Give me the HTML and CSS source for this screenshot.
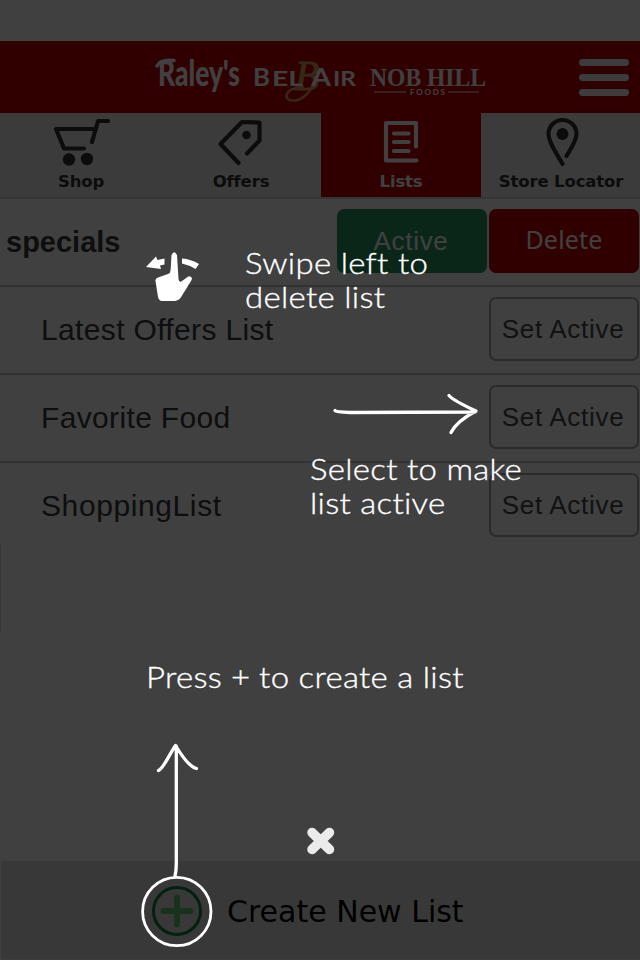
FILE: index.html
```html
<!DOCTYPE html>
<html lang="en">
<head>
<meta charset="utf-8">
<title>Shopping lists</title>
<link rel="stylesheet" href="styles.css">
</head>
<body>
<div class="app">
  <div class="status"></div>
  <header class="header">
    <svg class="brands" viewBox="0 0 340 72" width="340" height="72">
      <g fill="#fff">
        <text class="raleys" x="8" y="45" textLength="82" lengthAdjust="spacingAndGlyphs">Raley's</text>
        <path d="M7 25Q10 18 24 19.500" fill="none" stroke="#fff" stroke-width="3.500" stroke-linecap="round"/>
      </g>
      <g fill="none" stroke="#dcb868" opacity=".85">
        <text class="swash" x="145" y="49" fill="#dcb868" stroke="#dcb868" textLength="24" lengthAdjust="spacingAndGlyphs">B</text>
        <path d="M154 46C133 46 132 61 145 59.500C156 58 163 47 168 34" stroke-width="2.500"/>
      </g>
      <g fill="#fff">
        <text class="belair" y="45"><tspan class="big" x="103" textLength="17" lengthAdjust="spacingAndGlyphs">B</tspan><tspan x="122" textLength="31" lengthAdjust="spacingAndGlyphs">EL</tspan><tspan class="big" x="161" textLength="20" lengthAdjust="spacingAndGlyphs">A</tspan><tspan x="183" textLength="23" lengthAdjust="spacingAndGlyphs">IR</tspan></text>
        <text class="nobhill" x="220" y="45" textLength="116" lengthAdjust="spacingAndGlyphs">NOB HILL</text>
        <text class="foods" x="260" y="54" textLength="35">FOODS</text>
        <path d="M224 51h32M298 51h31" stroke="#fff"/>
      </g>
    </svg>
    <div class="menu"><i></i><i></i><i></i></div>
  </header>
  <nav class="tabs">
    <div class="tab">
      <svg viewBox="-2 0 60 52" width="60" height="52"><path d="M55 6H45L39 27M43 14H3L11 33.500H31" /><circle class="dot" cx="16" cy="44.500" r="6.200"/><circle class="dot" cx="34" cy="44" r="6.200"/></svg>
      <span>Shop</span>
    </div>
    <div class="tab">
      <svg viewBox="0 0 60 52" width="60" height="52"><path d="M27.500 48L9.500 29L31 7L48.500 7.500V25.500L36 38.500"/><circle class="dot" cx="35.500" cy="20" r="4.300"/></svg>
      <span>Offers</span>
    </div>
    <div class="tab current">
      <svg viewBox="0 0 60 52" width="60" height="52"><path d="M45 31.500V8H15V45.500H45.500M23 18.500H37.500M23 27H37.500M23 36H37.500"/></svg>
      <span>Lists</span>
    </div>
    <div class="tab">
      <svg viewBox="0 0 60 52" width="60" height="52"><path d="M35.500 41C39 35 45.500 26 45.500 19A14 14 0 0 0 17.500 19C17.500 28 26 39 31.500 49"/><circle class="dot" cx="31.500" cy="19" r="6"/></svg>
      <span>Store Locator</span>
    </div>
  </nav>
  <main class="lists">
    <div class="row swiped"><span class="name">specials</span><span class="btn active">Active</span><span class="btn delete">Delete</span></div>
    <div class="row"><span class="name">Latest Offers List</span><span class="btn">Set Active</span></div>
    <div class="row"><span class="name">Favorite Food</span><span class="btn">Set Active</span></div>
    <div class="row last"><span class="name">ShoppingList</span><span class="btn">Set Active</span></div>
    <div class="blank"></div>
  </main>
  <footer class="create">
    <svg viewBox="0 0 52 52" width="52" height="52"><circle cx="26" cy="26" r="23.500" fill="none" stroke="#108040" stroke-width="3"/><path d="M26 12.500V39.500M12.500 26H39.500" stroke="#60c86c" stroke-width="6" stroke-linecap="round"/></svg>
    <span>Create New List</span>
  </footer>
</div>
<div class="overlay">
  <svg class="marks" viewBox="0 0 640 960" width="640" height="960">
    <g fill="#fff">
      <path d="M146 267L156 256.500L157.500 260L164.500 258.500V264.500L160 265.500L161 269Z"/>
      <path d="M182 258.500Q191 259 199 264L195.500 269Q189 265 182 263.500Z"/>
      <path d="M171.500 255Q174.200 249.500 177 255L178.500 279Q179 283 182 281L187.500 277Q189.500 275.500 191.500 277.500Q192.500 279 191 281L180.500 298Q178 301 175 301H162Q159 301 158 297L155.500 281Q155 278.500 158 277.500L168 274Q170.500 273 170.600 270Z"/>
    </g>
    <g fill="none" stroke="#fff" stroke-width="3.300" stroke-linecap="round" stroke-linejoin="round">
      <path d="M335 410.500Q336 412 350 412.500L475 412M449 395.500Q454 401 476 411Q457 421 451 432.500"/>
      <path d="M175 876Q176.500 870 176.300 860V746M158.500 770.500C164 768 170 753 175.500 745.500C183 758 190 767 196.500 768.500"/>
      <circle cx="176.800" cy="911.500" r="34.200" stroke-width="2.800"/>
    </g>
    <path d="M312 832.500L329.500 849.500M329.500 832.500L312 849.500" stroke="#ebebeb" stroke-width="9.500" stroke-linecap="round"/>
  </svg>
  <p class="hint swipe">Swipe left to<br>delete list</p>
  <p class="hint select">Select to make<br>list active</p>
  <p class="hint press">Press<span class="plus">+</span>to create a list</p>
</div>
</body>
</html>
```
FILE: styles.css
```css
* { box-sizing: border-box; }
body { margin: 0; background: #fff; }
.app { width: 640px; height: 960px; display: flex; flex-direction: column; overflow: hidden; font-family: "Liberation Sans", sans-serif; }
.status { height: 41px; flex: none; }
.header { height: 72px; flex: none; background: #c00000; display: flex; align-items: center; justify-content: space-between; padding: 0 11px 0 150px; }
.raleys { font: 900 36px Lato, sans-serif; }
.swash { font: italic 42px "Liberation Serif", serif; }
.belair { font: bold 20px Lato, sans-serif; }
.belair .big { font-size: 25px; }
.nobhill { font: bold 26px "Liberation Serif", serif; }
.foods { font: bold 8px Lato, sans-serif; }
.menu { width: 50px; display: flex; flex-direction: column; gap: 8px; }
.menu i { height: 7px; border-radius: 4px; background: #f0f0f0; }
.tabs { height: 86px; flex: none; display: flex; background: #ececec; padding-left: 1px; border-bottom: 2px solid #d4d4d4; overflow: hidden; }
.tab { width: 160px; flex: none; display: flex; flex-direction: column; align-items: center; padding-top: 2px; color: #303030; font: bold 16.5px/20px "DejaVu Sans", sans-serif; letter-spacing: -.15px; white-space: nowrap; }
.tab span { margin-top: 5px; }
.tab path { fill: none; stroke: currentColor; stroke-width: 4.2; stroke-linecap: round; stroke-linejoin: round; }
.dot { fill: currentColor; }
.tab.current { background: #c00000; color: #fff; }
.lists { flex: 1; }
.row { height: 88px; display: flex; align-items: center; gap: 2px; padding: 0 1px 2px 41px; border-bottom: 2px solid #c8c8c8; color: #383838; font-size: 30px; letter-spacing: .35px; }
.row.last { border-bottom-color: transparent; letter-spacing: .6px; }
.name { flex: 1; padding-top: 2px; }
.swiped { padding-left: 6px; }
.swiped .name { font-size: 29px; font-weight: bold; letter-spacing: 0; }
.btn { width: 150px; height: 64px; border: 2px solid #a8a8a8; border-radius: 7px; text-align: center; padding-right: 2px; font-size: 26px; line-height: 60px; letter-spacing: .7px; color: #484848; }
.btn.active { background: #289860; border-color: #289860; color: #fff; }
.btn.delete { background: #c00000; border-color: #c00000; color: #fff; font: 25px/57px "Noto Sans", sans-serif; letter-spacing: .2px; padding: 0; }
.blank { height: 88px; margin-top: -7px; border-left: 1px solid #d8d8d8; }
.create { height: 99px; flex: none; display: flex; align-items: center; gap: 24px; margin-left: 1px; padding: 2px 0 0 150px; background: #e0e0e0; border-bottom: 1px solid #f4f4f4; color: #000; font: 30px "DejaVu Sans", sans-serif; }
.overlay { position: absolute; top: 0; left: 0; width: 640px; height: 960px; background: rgba(0, 0, 0, .75); }
.marks { display: block; }
.hint { position: absolute; margin: 0; color: #fff; font: 300 30px/34px Lato, sans-serif; letter-spacing: .25px; white-space: nowrap; transform: scaleX(1.1); transform-origin: left; -webkit-text-stroke: .35px #fff; }
.swipe { left: 245px; top: 244.5px; }
.select { left: 310px; top: 450.5px; }
.press { left: 146px; top: 658.5px; }
.plus { margin: 0 8px; }
```
